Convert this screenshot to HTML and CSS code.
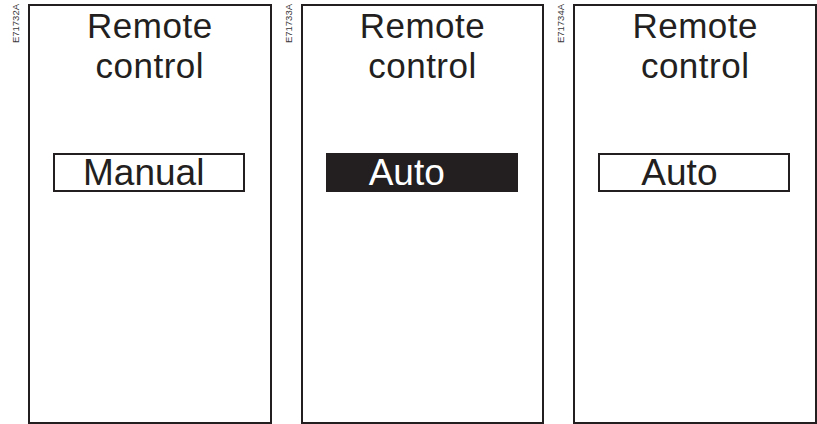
FILE: index.html
```html
<!DOCTYPE html>
<html lang="en">
<head>
<meta charset="utf-8">
<title>Remote control</title>
<link rel="stylesheet" href="styles.css">
</head>
<body>
<div class="screens">
  <div class="unit">
    <div class="ref">E71732A</div>
    <div class="panel">
      <div class="title">Remote<br>control</div>
      <div class="box box--manual">Manual</div>
    </div>
  </div>
  <div class="unit">
    <div class="ref">E71733A</div>
    <div class="panel">
      <div class="title">Remote<br>control</div>
      <div class="box box--auto box--selected">Auto</div>
    </div>
  </div>
  <div class="unit">
    <div class="ref">E71734A</div>
    <div class="panel">
      <div class="title">Remote<br>control</div>
      <div class="box box--auto">Auto</div>
    </div>
  </div>
</div>
</body>
</html>
```
FILE: styles.css
```css
html, body {
  margin: 0;
  padding: 0;
  background: #ffffff;
}

body {
  width: 817px;
  height: 424px;
  overflow: hidden;
  font-family: "Liberation Sans", Arial, sans-serif;
  color: #231f20;
}

.screens {
  display: flex;
  gap: 13px;
  padding-left: 12px;
  height: 424px;
}

.unit {
  flex: 1;
  display: flex;
  gap: 8px;
}

.ref {
  align-self: flex-start;
  margin-top: 4px;
  width: 8px;
  font-size: 9.5px;
  line-height: 8px;
  color: #3a3839;
  writing-mode: vertical-rl;
  transform: rotate(180deg);
  white-space: nowrap;
}

.panel {
  flex: 1;
  margin-top: 4px;
  height: 420px;
  box-sizing: border-box;
  border: 2px solid #231f20;
  display: flex;
  flex-direction: column;
}

.title {
  text-align: center;
  font-size: 35px;
  line-height: 40px;
  letter-spacing: 0.5px;
}

.box {
  margin-top: 67px;
  margin-left: 23px;
  width: 192px;
  height: 39px;
  box-sizing: border-box;
  border: 2px solid #231f20;
  font-size: 37px;
  line-height: 35px;
  white-space: nowrap;
}

.box--manual {
  padding-left: 28px;
}

.box--auto {
  padding-left: 41px;
}

.box--selected {
  background: #231f20;
  color: #ffffff;
}
```
